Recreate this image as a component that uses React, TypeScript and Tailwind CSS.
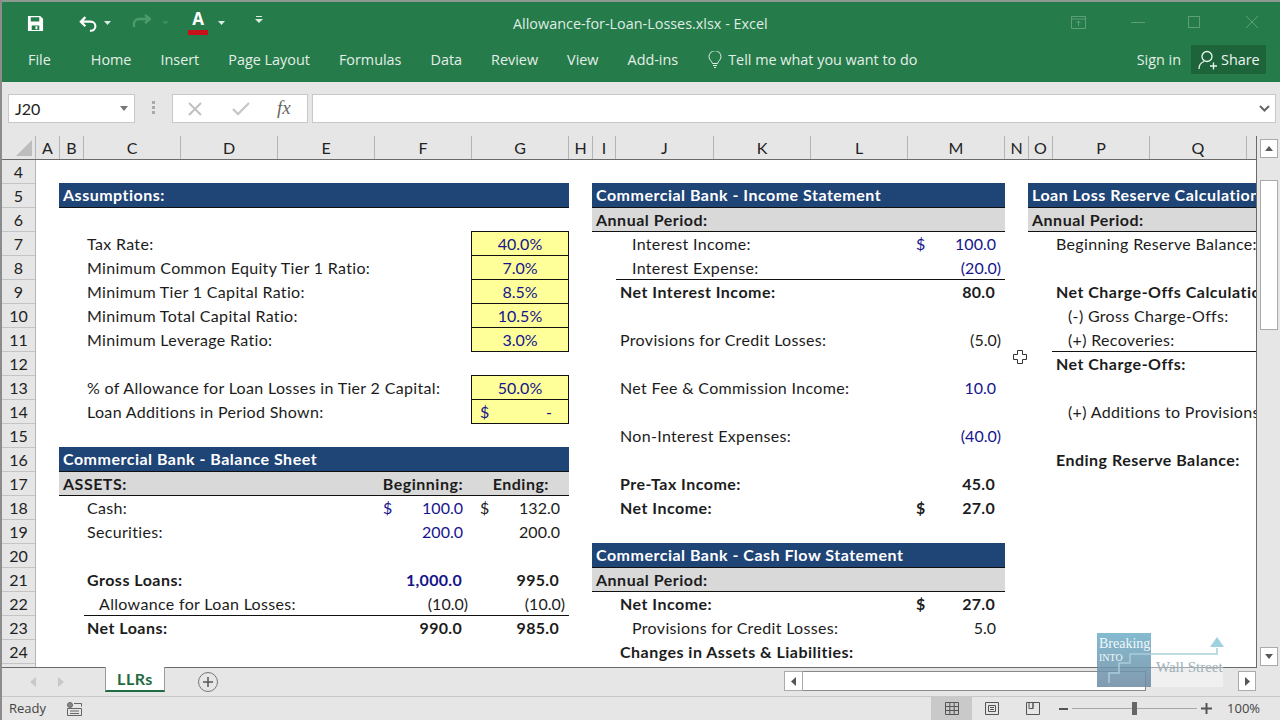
import React from "react";

const BLUE = "text-[#14148c]";

function Row({ label, pad = "pl-[28px]", bold, cls = "", children }: { label?: string; pad?: string; bold?: boolean; cls?: string; children?: React.ReactNode }) {
  return (
    <div className={"flex h-6 shrink-0 items-center " + cls}>
      <div className={"flex-1 min-w-0 whitespace-nowrap text-[#1c1c1c] " + pad + (bold ? " font-bold tracking-[0.48px]" : " tracking-[0.33px]")}>{label}</div>
      {children}
    </div>
  );
}

function Val({ v, dollar, bold, blue }: { v?: string; dollar?: boolean; bold?: boolean; blue?: boolean }) {
  const paren = v ? v.endsWith(")") : false;
  return (
    <div className={"flex h-6 w-[97px] shrink-0 items-center justify-between pl-2 " + (paren ? "pr-1 " : bold ? "pr-[10px] " : "pr-[9px] ") + (bold ? "font-bold tracking-[0.3px] " : "") + (blue ? BLUE : "text-[#1c1c1c]")}>
      <span>{dollar ? "$" : ""}</span>
      <span>{v}</span>
    </div>
  );
}

function Bar({ t }: { t: string }) {
  return <div className="-mt-px flex h-[25px] shrink-0 items-center whitespace-nowrap border-b border-[#111] bg-[#1f4476] pl-1 font-bold tracking-[0.5px] text-white">{t}</div>;
}

function Gray({ t, children }: { t: string; children?: React.ReactNode }) {
  return (
    <div className="flex h-6 shrink-0 items-center whitespace-nowrap border-b border-[#111] bg-[#d9d9d9] font-bold tracking-[0.5px] text-[#1c1c1c]">
      <div className="flex-1 pl-1">{t}</div>
      {children}
    </div>
  );
}

function Yellow({ v, top }: { v: string; top?: boolean }) {
  return <div className={"flex w-[98px] shrink-0 items-center justify-center border-x border-b border-[#111] bg-[#ffff99] text-[#14148c] " + (top ? "-mt-px h-[25px] self-start border-t" : "h-6")}>{v}</div>;
}

const COLS: [string, string][] = [
  ["A", "w-6"], ["B", "w-6"], ["C", "w-[97px]"], ["D", "w-[97px]"], ["E", "w-[97px]"], ["F", "w-[97px]"], ["G", "w-[97px]"], ["H", "w-6"], ["I", "w-[23px]"],
  ["J", "w-[98px]"], ["K", "w-[97px]"], ["L", "w-[97px]"], ["M", "w-[97px]"], ["N", "w-6"], ["O", "w-6"], ["P", "w-[97px]"], ["Q", "w-[97px]"],
];
const ROWS = [4, 5, 6, 7, 8, 9, 10, 11, 12, 13, 14, 15, 16, 17, 18, 19, 20, 21, 22, 23, 24];
const TABS = ["Home", "Insert", "Page Layout", "Formulas", "Data", "Review", "View", "Add-ins"];

function Tri({ d, c = "fill-[#5a5a5a]", w = 8, h = 5 }: { d: string; c?: string; w?: number; h?: number }) {
  return <svg width={w} height={h} viewBox={`0 0 ${w} ${h}`} className={c}><path d={d} /></svg>;
}

export default function App() {
  return (
    <div className="relative flex h-[720px] w-[1280px] flex-col overflow-hidden border-l-2 border-[#8c8c8c] bg-[#e6e6e6] font-['Lato','Liberation_Sans',sans-serif] text-[16px]">
      <div className="-ml-[2px] h-[2px] shrink-0 bg-[#8c9a92]" />
      {/* Title row */}
      <div className="flex h-[80px] shrink-0 flex-col bg-[#267b4a] font-['Open_Sans',sans-serif] text-[14.4px] text-[#e3efe8]">
        <div className="relative flex h-[40px] shrink-0 items-center">
          <svg width="17" height="17" viewBox="0 0 18 18" className="ml-[25px] mt-[2px] fill-white">
            <path fillRule="evenodd" d="M1 1h13l3 3v13H1zM4 2.500v4.500h9V2.500zM5 11v5h8v-5zM9 12h2v3H9z" />
          </svg>
          <svg width="20" height="17" viewBox="0 0 22 18" fill="none" stroke="white" strokeWidth="2.400" className="ml-[35px] mt-[2px]">
            <path d="M7 2 2 7l5 5M2 7h11a5 5 0 0 1 0 10h-1" />
          </svg>
          <Tri d="M0 0h7L3.500 4z" c="fill-[#dcebe2] ml-[5px] mt-[2px]" />
          <svg width="20" height="15" viewBox="0 0 20 15" fill="none" stroke="#4d9a6d" strokeWidth="2.400" className="ml-[19px] mt-[-1px]">
            <path d="M14 1l5 4-5 4M19 5H8a5 5 0 0 0-5 5v3" />
          </svg>
          <Tri d="M0 0h7L3.500 4z" c="fill-[#3d8c5e] ml-[11px] mt-[2px]" />
          <div className="ml-[18px] flex flex-col items-center">
            <span className="h-[20px] text-[17px] font-bold leading-[20px] text-white">A</span>
            <span className="mt-[1px] h-[5px] w-[20px] bg-[#c8101a]" />
          </div>
          <Tri d="M0 0h7L3.500 4z" c="fill-[#dcebe2] ml-[10px] mt-[2px]" />
          <svg width="8" height="8" viewBox="0 0 8 8" className="ml-[29px] mb-[4px] fill-[#dcebe2]">
            <path d="M1 0h6v1H1zM0 3h8L4 7z" />
          </svg>
          <div className="absolute left-[511px] top-[11px] whitespace-nowrap text-[#dfece4]">Allowance-for-Loan-Losses.xlsx - Excel</div>
          <div className="ml-auto flex items-center">
            <svg width="15" height="13" viewBox="0 0 15 13" fill="none" stroke="#5d9f79" className="mr-[45px]">
              <path d="M.5.5h14v12H.5zM.5 3h14M7.500 10V5M5.500 7l2-2 2 2" />
            </svg>
            <div className="mr-[43px] h-px w-[14px] bg-[#5d9f79]" />
            <div className="mr-[45px] h-[12px] w-[12px] border border-[#5d9f79]" />
            <svg width="14" height="14" viewBox="0 0 14 14" stroke="#5d9f79" className="mr-[21px]">
              <path d="M1 1l12 12M13 1 1 13" />
            </svg>
          </div>
        </div>
        <div className="flex h-[40px] items-center pb-[5px]">
          <span className="ml-[26px] mr-[40px]">File</span>
          <div className="flex gap-[29px]">
            {TABS.map((t) => (
              <span key={t}>{t}</span>
            ))}
          </div>
          <svg width="14" height="17" viewBox="0 0 14 17" fill="none" stroke="#e3efe8" className="ml-[30px] mr-[6px]">
            <path d="M4.500 12.500C4 10 1 9 1 5.700a6 6 0 0 1 12 0C13 9 10 10 9.500 12.500zM5 14.500h4M6 16.500h2" />
          </svg>
          <span>Tell me what you want to do</span>
          <span className="ml-auto">Sign in</span>
          <div className="ml-[10px] mr-[14px] flex h-[29px] w-[75px] items-center bg-[#1d643b] pl-[7px] text-[#eef6f1]">
            <svg width="20" height="20" viewBox="0 0 20 20" fill="none" stroke="#eef6f1" strokeWidth="1.300">
              <circle cx="9" cy="6.500" r="5" />
              <path d="M1 19c0-4 2-6.500 5-7.500M12 16h7M15.500 12.500v7" />
            </svg>
            <span className="ml-[3px]">Share</span>
          </div>
        </div>
      </div>
      {/* Formula bar */}
      <div className="flex h-[54px] shrink-0 items-start pl-[6px] pt-[12px]">
        <div className="flex h-[29px] w-[127px] items-center justify-between border border-[#c8c8c8] bg-white pl-[6px] pr-[6px] text-[#222]">
          <span>J20</span>
          <Tri d="M0 0h8L4 5z" c="fill-[#777]" />
        </div>
        <div className="ml-[17px] mt-[7px] flex flex-col gap-[2px]">
          <span className="h-[3px] w-[3px] bg-[#aaa]" />
          <span className="h-[3px] w-[3px] bg-[#aaa]" />
          <span className="h-[3px] w-[3px] bg-[#aaa]" />
        </div>
        <div className="ml-[17px] flex h-[29px] w-[136px] items-center border border-[#c8c8c8] bg-white">
          <svg width="16" height="14" viewBox="0 0 16 14" stroke="#c0c0c0" strokeWidth="2" className="ml-[14px]">
            <path d="M2 1l12 12M14 1 2 13" />
          </svg>
          <svg width="18" height="14" viewBox="0 0 18 14" fill="none" stroke="#c8c8c8" strokeWidth="2.400" className="ml-[29px]">
            <path d="M1 7l5 5L17 1" />
          </svg>
          <span className="ml-[27px] font-['Liberation_Serif',serif] text-[19px] italic text-[#666]">fx</span>
        </div>
        <div className="ml-[4px] flex h-[29px] w-[964px] items-center justify-end border border-[#c8c8c8] bg-white pr-[5px]">
          <svg width="11" height="7" viewBox="0 0 11 7" fill="none" stroke="#666" strokeWidth="2"><path d="M1 1l4.500 4.500L10 1" /></svg>
        </div>
      </div>
      {/* Sheet */}
      <div className="flex h-[532px] shrink-0">
        <div className="flex w-[1255px] shrink-0 flex-col border-r border-b border-[#6a6a6a] bg-[#e6e6e6]">
          {/* column header */}
          <div className="flex h-6 shrink-0 border-b border-[#6a6a6a] pl-px">
            <div className="flex w-[33px] shrink-0 items-end justify-end border-r border-[#b4b4b4] pb-[3px] pr-[3px]">
              <svg width="16" height="16" viewBox="0 0 16 16" className="fill-[#bdbdbd]"><path d="M16 0v16H0z" /></svg>
            </div>
            {COLS.map(([l, w]) => (
              <div key={l} className={"flex shrink-0 items-center justify-center border-r border-[#b4b4b4] text-[#222] " + w}>{l}</div>
            ))}
          </div>
          <div className="flex min-h-0 flex-1">
            <div className="flex w-[34px] shrink-0 flex-col overflow-hidden border-r border-[#b4b4b4]">
              {ROWS.map((r) => (
                <div key={r} className="flex h-6 shrink-0 items-center justify-center border-b border-[#c4c4c4] text-[#222]">{r}</div>
              ))}
            </div>
            <div className="flex min-w-0 flex-1 overflow-hidden bg-white">
              {/* Left panel */}
              <div className="flex w-[556px] shrink-0 flex-col pl-[23px] pr-[23px]">
                <div className="h-6 shrink-0" />
                <Bar t="Assumptions:" />
                <div className="h-6 shrink-0" />
                <Row label="Tax Rate:"><Yellow v="40.0%" top /></Row>
                <Row label="Minimum Common Equity Tier 1 Ratio:"><Yellow v="7.0%" /></Row>
                <Row label="Minimum Tier 1 Capital Ratio:"><Yellow v="8.5%" /></Row>
                <Row label="Minimum Total Capital Ratio:"><Yellow v="10.5%" /></Row>
                <Row label="Minimum Leverage Ratio:"><Yellow v="3.0%" /></Row>
                <div className="h-6 shrink-0" />
                <Row label="% of Allowance for Loan Losses in Tier 2 Capital:"><Yellow v="50.0%" top /></Row>
                <Row label="Loan Additions in Period Shown:">
                  <div className="flex h-6 w-[98px] shrink-0 items-center justify-between border-x border-b border-[#111] bg-[#ffff99] pl-2 pr-4 text-[#14148c]">
                    <span>$</span>
                    <span>-</span>
                  </div>
                </Row>
                <div className="h-6 shrink-0" />
                <Bar t="Commercial Bank - Balance Sheet" />
                <Gray t="ASSETS:">
                  <div className="w-[97px] pr-[9px] text-right">Beginning:</div>
                  <div className="w-[97px] pr-5 text-right">Ending:</div>
                </Gray>
                <Row label="Cash:"><Val v="100.0" dollar blue /><Val v="132.0" dollar /></Row>
                <Row label="Securities:"><Val v="200.0" blue /><Val v="200.0" /></Row>
                <div className="h-6 shrink-0" />
                <Row label="Gross Loans:" bold><Val v="1,000.0" bold blue /><Val v="995.0" bold /></Row>
                <Row label="Allowance for Loan Losses:" pad="pl-[15px]" cls="ml-[25px] border-b border-[#111]"><Val v="(10.0)" /><Val v="(10.0)" /></Row>
                <Row label="Net Loans:" bold><Val v="990.0" bold /><Val v="985.0" bold /></Row>
              </div>
              {/* Middle panel */}
              <div className="flex w-[436px] shrink-0 flex-col pr-[23px]">
                <div className="h-6 shrink-0" />
                <Bar t="Commercial Bank - Income Statement" />
                <Gray t="Annual Period:" />
                <Row label="Interest Income:" pad="pl-[40px]"><Val v="100.0" dollar blue /></Row>
                <Row label="Interest Expense:" pad="pl-[16px]" cls="ml-6 border-b border-[#111]"><Val v="(20.0)" blue /></Row>
                <Row label="Net Interest Income:" pad="pl-[28px]" bold><Val v="80.0" bold /></Row>
                <div className="h-6 shrink-0" />
                <Row label="Provisions for Credit Losses:"><Val v="(5.0)" /></Row>
                <div className="h-6 shrink-0" />
                <Row label="Net Fee & Commission Income:"><Val v="10.0" blue /></Row>
                <div className="h-6 shrink-0" />
                <Row label="Non-Interest Expenses:"><Val v="(40.0)" blue /></Row>
                <div className="h-6 shrink-0" />
                <Row label="Pre-Tax Income:" bold><Val v="45.0" bold /></Row>
                <Row label="Net Income:" bold><Val v="27.0" dollar bold /></Row>
                <div className="h-6 shrink-0" />
                <Bar t="Commercial Bank - Cash Flow Statement" />
                <Gray t="Annual Period:" />
                <Row label="Net Income:" bold><Val v="27.0" dollar bold /></Row>
                <Row label="Provisions for Credit Losses:" pad="pl-[40px]"><Val v="5.0" /></Row>
                <Row label="Changes in Assets & Liabilities:" bold />
              </div>
              {/* Right panel */}
              <div className="flex min-w-0 flex-1 flex-col overflow-hidden">
                <div className="h-6 shrink-0" />
                <Bar t="Loan Loss Reserve Calculation" />
                <Gray t="Annual Period:" />
                <Row label="Beginning Reserve Balance:" />
                <div className="h-6 shrink-0" />
                <Row label="Net Charge-Offs Calculation" bold />
                <Row label="(-) Gross Charge-Offs:" pad="pl-[40px]" />
                <Row label="(+) Recoveries:" pad="pl-[16px]" cls="ml-6 border-b border-[#111]" />
                <Row label="Net Charge-Offs:" bold />
                <div className="h-6 shrink-0" />
                <Row label="(+) Additions to Provisions" pad="pl-[40px]" />
                <div className="h-6 shrink-0" />
                <Row label="Ending Reserve Balance:" bold />
              </div>
            </div>
          </div>
        </div>
        {/* Vertical scrollbar */}
        <div className="flex flex-1 flex-col items-end pr-[2px] pt-[3px]">
          <div className="flex h-[19px] w-[18px] shrink-0 items-center justify-center border border-[#ababab] bg-white"><Tri d="M0 5h8L4 0z" w={8} h={5} /></div>
          <div className="mt-[22px] h-[150px] w-[18px] shrink-0 border border-[#ababab] bg-white" />
          <div className="mt-auto mb-[2px] flex h-[19px] w-[18px] shrink-0 items-center justify-center border border-[#ababab] bg-white"><Tri d="M0 0h8L4 5z" /></div>
        </div>
      </div>
      {/* Tab bar */}
      <div className="flex h-[29px] shrink-0 border-b border-[#c8c8c8]">
        <svg width="6" height="10" viewBox="0 0 6 10" className="ml-[28px] mt-[9px] fill-[#c8c8c8]"><path d="M6 0v10L0 5z" /></svg>
        <svg width="6" height="10" viewBox="0 0 6 10" className="ml-[22px] mt-[9px] fill-[#c8c8c8]"><path d="M0 0v10l6-5z" /></svg>
        <div className="-mt-px ml-[41px] flex h-[25px] w-[60px] items-center justify-center border-x border-b-2 border-x-[#9a9a9a] border-b-[#1f6b41] bg-white text-[16px] font-bold tracking-[0.5px] text-[#1f6b41]">LLRs</div>
        <div className="ml-[33px] mt-[4px] flex h-[20px] w-[20px] items-center justify-center rounded-full border border-[#777] text-[#555]">
          <svg width="12" height="12" viewBox="0 0 12 12" stroke="#555" strokeWidth="1.500"><path d="M6 1v10M1 6h10" /></svg>
        </div>
        <div className="ml-[566px] mt-[3px] flex h-[20px] w-[19px] items-center justify-center border border-[#ababab] bg-white">
          <Tri d="M5 0v9L0 4.500z" w={5} h={9} c="fill-[#555]" />
        </div>
        <div className="mt-[3px] h-[20px] w-[343px] border-y border-r border-[#8a8a8a] bg-white" />
        <div className="w-[92px]" />
        <div className="mt-[3px] flex h-[20px] w-[18px] items-center justify-center border border-[#ababab] bg-white">
          <Tri d="M0 0v9l5-4.500z" w={5} h={9} c="fill-[#555]" />
        </div>
      </div>
      {/* Status bar */}
      <div className="flex min-h-0 flex-1 items-center font-['Open_Sans',sans-serif] text-[13px] text-[#444]">
        <span className="ml-[7px]">Ready</span>
        <svg width="15" height="14" viewBox="0 0 15 14" fill="none" stroke="#666" className="ml-[21px]">
          <circle cx="3" cy="3" r="2.500" fill="#888" />
          <path d="M7 1.500h7.500v3M.5 6.500h14v7H.5zM3 9h9M3 11.500h9" />
        </svg>
        <div className="ml-[849px] flex h-full w-[41px] items-center justify-center bg-[#c9c9c9]">
          <svg width="14" height="13" viewBox="0 0 14 13" fill="none" stroke="#555"><path d="M.5.5h13v12H.5zM.5 4.500h13M.5 8.500h13M4.800.5v12M9.200.5v12" /></svg>
        </div>
        <svg width="14" height="13" viewBox="0 0 14 13" fill="none" stroke="#555" className="ml-[13px]"><path d="M.5.5h13v12H.5zM3.500 3.500h7v6h-7zM5 5.500h4M5 7.500h4" /></svg>
        <svg width="14" height="13" viewBox="0 0 14 13" fill="none" stroke="#555" className="ml-[27px]"><path d="M.5.5h13v12H.5zM7 .5v6H3V.5M7 6.500V.5" /></svg>
        <div className="ml-[19px] h-[2px] w-[9px] bg-[#555]" />
        <div className="relative ml-[4px] h-px w-[125px] bg-[#a8a8a8]">
          <div className="absolute left-[60px] top-[-6px] h-[13px] w-[5px] bg-[#666]" />
        </div>
        <svg width="11" height="11" viewBox="0 0 11 11" stroke="#555" strokeWidth="2" className="ml-[4px]"><path d="M5.500 0v11M0 5.500h11" /></svg>
        <span className="ml-[15px]">100%</span>
      </div>
      {/* Cell cursor */}
      <svg width="16" height="16" viewBox="0 0 16 16" className="absolute left-[1010px] top-[349px]" fill="white" stroke="#333">
        <path d="M5.500 1.500h5v4h4v5h-4v4h-5v-4h-4v-5h4z" />
      </svg>
      {/* Watermark */}
      <div className="absolute left-[1149px] top-[655px] h-[32px] w-[72px] bg-white/40" />
      <div className="absolute left-[1095px] top-[633px] h-[54px] w-[54px] bg-gradient-to-b from-[#6fafc9] to-[#6d8aa2] opacity-85">
        <div className="pl-[2px] pt-[3px] font-['Liberation_Serif',serif] text-[14px] leading-[16px] text-[#eef7f9]">Breaking</div>
        <div className="pl-[2px] font-['Liberation_Serif',serif] text-[10px] leading-[11px] text-[#eef7f9]">INTO</div>
      </div>
      <svg width="118" height="48" viewBox="0 0 118 48" fill="none" className="absolute left-[1106px] top-[636px]" stroke="#a9ced9">
        <path d="M1 47V37H11V27H22V18H109V12" strokeWidth="1.500" />
        <path d="M102 11h14l-7-10z" fill="#9dd2de" stroke="none" />
      </svg>
      <div className="absolute left-[1154px] top-[656px] font-['Liberation_Serif',serif] text-[15px] text-[#9db0b8]">Wall Street</div>
    </div>
  );
}
